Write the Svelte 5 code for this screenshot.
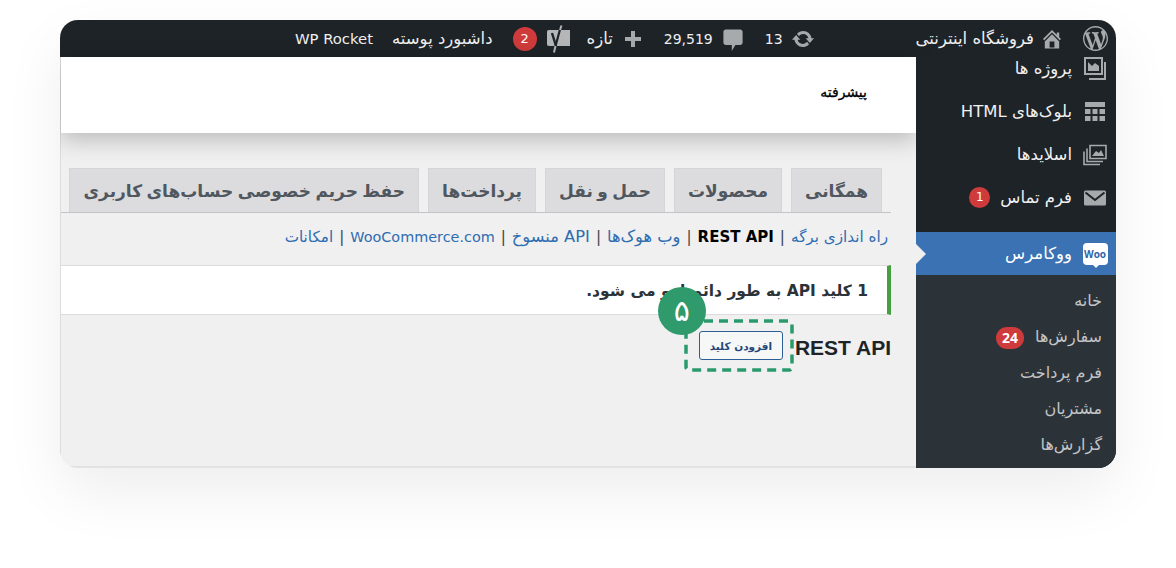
<script>
    const mainMenu = [
        { label: 'پروژه ها', icon: 'portfolio' },
        { label: 'بلوک‌های HTML', icon: 'blocks' },
        { label: 'اسلایدها', icon: 'slides' },
        { label: 'فرم تماس', icon: 'mail', badge: 1 }
    ]

    const subMenu = [
        { label: 'خانه' },
        { label: 'سفارش‌ها', badge: 24 },
        { label: 'فرم پرداخت' },
        { label: 'مشتریان' },
        { label: 'گزارش‌ها' }
    ]

    const tabs = ['همگانی', 'محصولات', 'حمل و نقل', 'پرداخت‌ها', 'حفظ حریم خصوصی حساب‌های کاربری']

    const sections = [
        { label: 'راه اندازی برگه' },
        { label: 'REST API', current: true },
        { label: 'وب هوک‌ها', wide: true },
        { label: 'API منسوخ', wide: true },
        { label: 'WooCommerce.com', latin: true },
        { label: 'امکانات' }
    ]
</script>

<div class="page" dir="rtl">
    <div class="window">
        <header class="topbar">
            <svg class="ab-wp" viewBox="0 0 20 20"><path d="M20 10c0-5.51-4.49-10-10-10C4.48 0 0 4.49 0 10c0 5.52 4.48 10 10 10 5.51 0 10-4.48 10-10zM7.78 15.37L4.37 6.22c.55-.02 1.17-.08 1.17-.08.5-.06.44-1.13-.06-1.11 0 0-1.45.11-2.37.11-.18 0-.37 0-.58-.01C4.12 2.69 6.87 1.11 10 1.11c2.33 0 4.45.87 6.05 2.34-.68-.11-1.65.39-1.65 1.58 0 .74.45 1.36.9 2.1.35.61.55 1.36.55 2.46 0 1.49-1.4 5-1.4 5l-3.03-8.37c.54-.02.82-.17.82-.17.5-.05.44-1.25-.06-1.22 0 0-1.44.12-2.38.12-.87 0-2.33-.12-2.33-.12-.5-.03-.56 1.2-.06 1.22l.92.08 1.26 3.41zM17.41 10c.24-.64.74-1.87.43-4.25.7 1.29 1.05 2.71 1.05 4.25 0 3.29-1.73 6.24-4.4 7.78.97-2.59 1.94-5.2 2.92-7.78zM6.1 18.09C3.12 16.65 1.11 13.53 1.11 10c0-1.3.23-2.48.72-3.59C3.25 10.3 4.67 14.2 6.1 18.09zm4.03-6.63l2.58 6.98c-.86.29-1.76.45-2.71.45-.79 0-1.57-.11-2.29-.33.81-2.38 1.62-4.74 2.42-7.1z"/></svg>
            <svg class="ab-home" viewBox="0 0 20 20"><path d="M16 8.5l1.53 1.53-1.06 1.06L10 4.62l-6.47 6.47-1.06-1.06L10 2.5l4 4v-2h2v4zm-6-2.46l6 5.99V18H4v-5.97zM12 17v-5H8v5h4z"/></svg>
            <span class="ab-site">فروشگاه اینترنتی</span>
            <svg class="ab-update" viewBox="0 0 20 20"><path d="M10.2 3.28c3.53 0 6.43 2.61 6.92 6h2.08l-3.5 4-3.5-4h2.32c-.45-1.97-2.21-3.45-4.32-3.45-1.45 0-2.73.71-3.54 1.78L4.95 5.66C6.23 4.2 8.11 3.28 10.2 3.28zm-.4 13.44c-3.52 0-6.43-2.61-6.92-6H.8l3.5-4c1.17 1.33 2.33 2.67 3.5 4H5.48c.45 1.97 2.21 3.45 4.32 3.45 1.45 0 2.73-.71 3.54-1.78l1.71 1.95c-1.28 1.46-3.15 2.38-5.25 2.38z"/></svg>
            <span class="ab-count">13</span>
            <svg class="ab-comment" viewBox="0 0 20 20"><path d="M4 2h12c1.1 0 2 .9 2 2v9c0 1.1-.9 2-2 2h-4l-3 5v-5H4c-1.1 0-2-.9-2-2V4c0-1.1.9-2 2-2z"/></svg>
            <span class="ab-comments">29,519</span>
            <svg class="ab-plus" viewBox="0 0 16 16"><path d="M6 0h4v6h6v4h-6v6H6v-6H0V6h6z"/></svg>
            <span class="ab-new">تازه</span>
            <svg class="ab-yoast" viewBox="0 0 26 28">
                <path d="M3 5h21v16H3c-1.500 0-2-.8-2-2V7c0-1.200.5-2 2-2z" fill="#b4b6b8"/>
                <path d="M6 8l4 13" fill="none" stroke="#1d2327" stroke-width="2.400"/>
                <path d="M14 4.500L9.500 21" fill="none" stroke="#1d2327" stroke-width="2.200"/>
                <path d="M15.500 0.500L14 5" fill="none" stroke="#b4b6b8" stroke-width="2"/>
                <path d="M9.500 21L8 27.500" fill="none" stroke="#b4b6b8" stroke-width="2"/>
            </svg>
            <span class="badge ab-badge">2</span>
            <span class="ab-theme">داشبورد پوسته</span>
            <span class="ab-rocket">WP Rocket</span>
        </header>

        <div class="body">
            <aside class="sidebar">
                <ul class="menu">
                    {#each mainMenu as item}
                        <li class="menu-item">
                            <span class="menu-icon">
                                {#if item.icon === 'portfolio'}
                                    <svg viewBox="0 0 24 24" fill="none" stroke="#a7aaad" stroke-width="2"><path d="M2 1h17v16H2z"/><path d="M22 5v17H6"/><path d="M5 14V5l4 4 3-3 4 3v5z" fill="#a7aaad" stroke="none"/></svg>
                                {:else if item.icon === 'blocks'}
                                    <svg viewBox="0 0 24 24" fill="#a7aaad"><path d="M2 2h20v5H2zM2 9h5.500v5H2zM9.500 9h5v5h-5zM16.500 9H22v5h-5.500zM2 16h5.500v5H2zM9.500 16h5v5h-5zM16.500 16H22v5h-5.500z"/></svg>
                                {:else if item.icon === 'slides'}
                                    <svg viewBox="0 0 24 24" fill="none" stroke="#a7aaad" stroke-width="1.600"><path d="M7 2.500h16v13H7z"/><path d="M4 5.500v13h16"/><path d="M1 8.500v13h16"/><path d="M9 13l4-5 3 2 2-3 3 6z" fill="#a7aaad" stroke="none"/></svg>
                                {:else}
                                    <svg viewBox="0 0 24 24"><rect x="1" y="4.500" width="22" height="15" rx="1.500" fill="#a7aaad"/><path d="M2.500 6.500L12 14l9.500-7.500" fill="none" stroke="#1d2327" stroke-width="2"/></svg>
                                {/if}
                            </span>
                            <span class="menu-label">{item.label}</span>
                            {#if item.badge}
                                <span class="badge menu-badge">{item.badge}</span>
                            {/if}
                        </li>
                    {/each}
                </ul>

                <div class="menu-item active">
                    <span class="menu-icon">
                        <span class="woo-icon">Woo</span>
                    </span>
                    <span class="menu-label">ووکامرس</span>
                    <span class="notch"></span>
                </div>

                <ul class="submenu">
                    {#each subMenu as item}
                        <li>
                            {item.label}
                            {#if item.badge}
                                <span class="badge sub-badge">{item.badge}</span>
                            {/if}
                        </li>
                    {/each}
                </ul>
            </aside>

            <main class="content">
                <div class="page-head">پیشرفته</div>

                <div class="settings">
                    <nav class="tabs">
                        {#each tabs as tab}
                            <span class="tab">{tab}</span>
                        {/each}
                        <span class="tab-stub"></span>
                    </nav>

                    <div class="sections">
                        {#each sections as section, i}
                            {#if i > 0}<span class="sep">|</span>{/if}
                            <span class:current={section.current} class:latin={section.latin} class:wide={section.wide} class="section">{section.label}</span>
                        {/each}
                    </div>

                    <div class="notice">1 کلید API به طور دائم لغو می شود.</div>

                    <div class="title-row">
                        <h2>REST API</h2>
                        <span class="add-key">
                            <button type="button">افزودن کلید</button>
                            <svg class="dashed" viewBox="0 0 110 53"><rect x="2" y="2" width="106" height="49" rx="3" fill="none" stroke="#2a9a6c" stroke-width="3.500" stroke-dasharray="9 6"/></svg>
                            <span class="step">۵</span>
                        </span>
                    </div>
                </div>
            </main>
        </div>
    </div>
</div>

<style>
    :global(body) {
        margin: 0;
        background: #fff;
    }

    .page {
        box-sizing: border-box;
        width: 1176px;
        height: 568px;
        padding: 20px 60px 100px;
        overflow: hidden;
        font-family: "DejaVu Sans", sans-serif;
    }

    .window {
        height: 448px;
        display: flex;
        flex-direction: column;
        border-radius: 18px;
        overflow: hidden;
        background: #f0f0f1;
        box-shadow: 0 24px 60px rgba(0, 0, 0, 0.07);
    }

    /* top bar */
    .topbar {
        flex: none;
        height: 37px;
        display: flex;
        align-items: center;
        background: #1d2327;
        color: #f0f0f1;
        font-size: 16.5px;
        white-space: nowrap;
    }

    .topbar svg {
        flex: none;
        fill: #a7aaad;
    }

    .ab-wp { width: 25px; height: 25px; margin-right: 8px; }
    .ab-home { width: 24px; height: 24px; margin-right: 19px; }
    .ab-site { margin-right: 6px; }
    .ab-update { width: 24px; height: 24px; margin-right: 101px; }
    .ab-count { margin-right: 8px; font-size: 14px; }
    .ab-comment { width: 24px; height: 24px; margin-right: 20px; }
    .ab-comments { margin-right: 8px; font-size: 14px; }
    .ab-plus { width: 16px; height: 16px; margin-right: 23px; }
    .ab-new { margin-right: 12px; }
    .ab-yoast { width: 26px; height: 28px; margin-right: 15px; }
    .ab-badge { margin-right: 9px; }
    .ab-theme { margin-right: 20px; }
    .ab-rocket { margin-right: 19px; font-size: 14.8px; }

    .badge {
        flex: none;
        display: inline-block;
        min-width: 24px;
        height: 24px;
        line-height: 24px;
        box-sizing: border-box;
        padding: 0 5px;
        border-radius: 12px;
        background: #cf3b3b;
        color: #fff;
        text-align: center;
        font-size: 13px;
    }

    .body {
        flex: 1;
        min-height: 0;
        display: flex;
    }

    /* admin menu */
    .sidebar {
        flex: none;
        width: 200px;
        position: relative;
        z-index: 1;
        display: flex;
        flex-direction: column;
        overflow: hidden;
        background: #1d2327;
        color: #f0f0f1;
    }

    .menu {
        list-style: none;
        margin: -10px 0 13px;
        padding: 0;
    }

    .menu-item {
        height: 43px;
        display: flex;
        align-items: center;
        padding-right: 9px;
        font-size: 16.5px;
    }

    .menu-icon {
        flex: none;
        width: 24px;
        height: 24px;
        margin-left: 11px;
        display: flex;
        align-items: center;
        justify-content: center;
    }

    .menu-icon svg {
        width: 24px;
        height: 24px;
    }

    .menu-badge {
        min-width: 21px;
        height: 21px;
        line-height: 21px;
        margin-right: 10px;
        font-size: 12px;
    }

    .active {
        position: relative;
        background: #3a72b3;
        color: #fff;
    }

    .woo-icon {
        position: relative;
        flex: none;
        width: 25px;
        height: 22px;
        border-radius: 4px;
        background: #fff;
        color: #2f66a8;
        font: 700 10px/22px "Open Sans", sans-serif;
        text-align: center;
        direction: ltr;
    }

    .woo-icon::after {
        content: "";
        position: absolute;
        left: 10px;
        bottom: -3px;
        border: 3px solid transparent;
        border-bottom: 0;
        border-top-color: #fff;
    }

    .notch {
        position: absolute;
        left: 0;
        top: 12px;
        border: 10px solid transparent;
        border-right: 0;
        border-left-color: #f0f0f1;
    }

    .submenu {
        flex: 1;
        list-style: none;
        margin: 0;
        padding: 8px 0 0;
        background: #2c3338;
        color: #c3c4c7;
        font-size: 16px;
    }

    .submenu li {
        height: 36px;
        line-height: 36px;
        padding-right: 14px;
    }

    .sub-badge {
        margin-right: 6px;
        height: 22px;
        padding: 0 6px;
        border-radius: 11px;
        font: 700 14px/22px "Open Sans", sans-serif;
        vertical-align: middle;
    }

    /* content */
    .content {
        flex: 1;
        min-width: 0;
        display: flex;
        flex-direction: column;
        border-left: 1px solid #dcdcde;
        border-bottom: 2px solid #e2e2e4;
    }

    .page-head {
        flex: none;
        height: 76px;
        box-sizing: border-box;
        padding: 27px 49px 0 0;
        background: #fff;
        color: #000;
        font-size: 14px;
        -webkit-text-stroke: 0.3px #000;
        box-shadow: 0 6px 22px rgba(0, 0, 0, 0.24);
    }

    .settings {
        flex: 1;
        padding: 35px 25px 0 0;
    }

    .tabs {
        display: flex;
        gap: 9px;
        height: 45px;
        box-sizing: border-box;
        padding-right: 9px;
        border-bottom: 1px solid #c3c4c7;
        white-space: nowrap;
    }

    .tab {
        flex: none;
        height: 44px;
        box-sizing: border-box;
        padding: 0 13px;
        line-height: 44px;
        background: #dcdcde;
        border: 1px solid #d5d5d7;
        border-bottom: 0;
        color: #50575e;
        font-size: 17px;
        font-weight: 700;
        word-spacing: -1.5px;
    }

    .tab-stub {
        flex: 1;
        background: #dcdcde;
        border-right: 1px solid #c3c4c7;
    }

    .sections {
        display: flex;
        align-items: center;
        height: 47px;
        padding: 0 3px 0 0;
        color: #3c434a;
        font-size: 15.2px;
        white-space: nowrap;
        box-sizing: border-box;
    }

    .section {
        color: #2f6cb0;
    }

    .section.wide {
        font-size: 16.3px;
    }

    .section.latin {
        font-size: 14.4px;
    }

    .section.current {
        color: #000;
        font-weight: 700;
        font-size: 15px;
    }

    .sep {
        margin: 0 6px;
    }

    .notice {
        height: 50px;
        box-sizing: border-box;
        margin-top: 5px;
        padding: 0 19px 0 0;
        line-height: 50px;
        background: #fff;
        border-right: 4px solid #46a040;
        border-top: 1px solid #dcdcde;
        border-bottom: 1px solid #dcdcde;
        color: #2c3338;
        font-size: 15.5px;
        font-weight: 700;
    }

    .title-row {
        display: flex;
        align-items: flex-start;
        margin-top: 16px;
    }

    h2 {
        margin: 2px 0 0;
        color: #1d2327;
        font: 700 21px/29px "Liberation Sans", sans-serif;
    }

    .add-key {
        position: relative;
        margin-right: 12px;
        display: block;
    }

    button {
        display: block;
        width: 84px;
        height: 29px;
        padding: 0;
        border: 1px solid #2c5f98;
        border-radius: 3px;
        background: #f6f7f7;
        color: #24487a;
        font: 700 10.5px "DejaVu Sans", sans-serif;
    }

    .dashed {
        position: absolute;
        left: -15px;
        top: -12px;
        width: 110px;
        height: 53px;
    }

    .step {
        position: absolute;
        left: -41px;
        top: -44px;
        width: 48px;
        height: 48px;
        border-radius: 50%;
        background: #2f9a6c;
        color: #fff;
        font-size: 30px;
        line-height: 48px;
        text-align: center;
    }
</style>
